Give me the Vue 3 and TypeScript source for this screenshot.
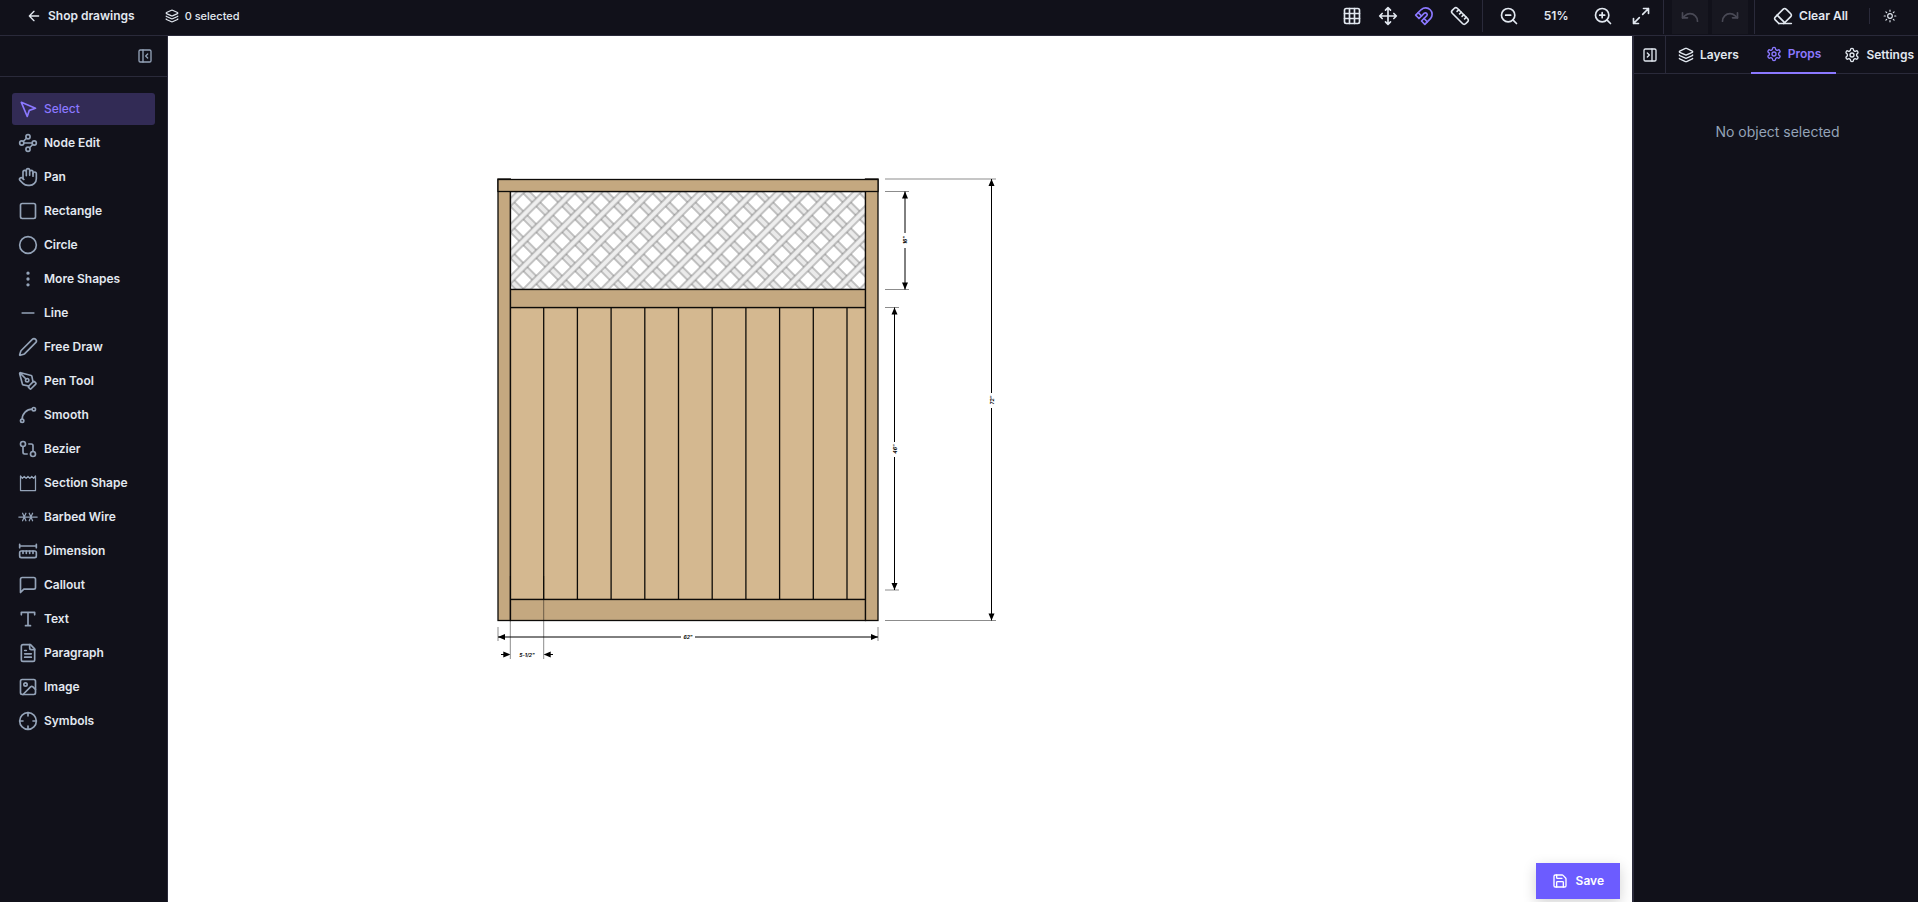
<script setup lang="ts">
import { h, ref, type FunctionalComponent } from 'vue'

const GEAR =
  '<path d="M12.22 2h-.44a2 2 0 0 0-2 2v.18a2 2 0 0 1-1 1.73l-.43.25a2 2 0 0 1-2 0l-.15-.08a2 2 0 0 0-2.73.73l-.22.38a2 2 0 0 0 .73 2.73l.15.1a2 2 0 0 1 1 1.72v.51a2 2 0 0 1-1 1.74l-.15.09a2 2 0 0 0-.73 2.73l.22.38a2 2 0 0 0 2.73.73l.15-.08a2 2 0 0 1 2 0l.43.25a2 2 0 0 1 1 1.73V20a2 2 0 0 0 2 2h.44a2 2 0 0 0 2-2v-.18a2 2 0 0 1 1-1.73l.43-.25a2 2 0 0 1 2 0l.15.08a2 2 0 0 0 2.73-.73l.22-.39a2 2 0 0 0-.73-2.73l-.15-.08a2 2 0 0 1-1-1.74v-.5a2 2 0 0 1 1-1.74l.15-.09a2 2 0 0 0 .73-2.73l-.22-.38a2 2 0 0 0-2.73-.73l-.15.08a2 2 0 0 1-2 0l-.43-.25a2 2 0 0 1-1-1.73V4a2 2 0 0 0-2-2z"/><circle cx="12" cy="12" r="3"/>'

const icons: Record<string, string> = {
  back: '<path d="m12 19-7-7 7-7M19 12H5"/>',
  layers:
    '<path d="M12.83 2.18a2 2 0 0 0-1.66 0L2.6 6.08a1 1 0 0 0 0 1.83l8.58 3.91a2 2 0 0 0 1.66 0l8.58-3.9a1 1 0 0 0 0-1.83z"/><path d="M2 12a1 1 0 0 0 .58.91l8.6 3.91a2 2 0 0 0 1.65 0l8.58-3.9A1 1 0 0 0 22 12"/><path d="M2 17a1 1 0 0 0 .58.91l8.6 3.91a2 2 0 0 0 1.65 0l8.58-3.9A1 1 0 0 0 22 17"/>',
  grid: '<rect x="3" y="3" width="18" height="18" rx="2"/><path d="M3 9h18M3 15h18M9 3v18M15 3v18"/>',
  move: '<path d="M12 2v20M15 19l-3 3-3-3M19 9l3 3-3 3M2 12h20M5 9l-3 3 3 3M9 5l3-3 3 3"/>',
  magnet:
    '<path d="m6 15-4-4 6.75-6.77a7.79 7.79 0 0 1 11 11L13 22l-4-4 6.39-6.36a2.14 2.14 0 0 0-3-3L6 15"/><path d="m5 8 4 4M12 15l4 4"/>',
  ruler:
    '<path d="M21.3 15.3a2.4 2.4 0 0 1 0 3.4l-2.6 2.6a2.4 2.4 0 0 1-3.4 0L2.7 8.7a2.41 2.41 0 0 1 0-3.4l2.6-2.6a2.41 2.41 0 0 1 3.4 0Z"/><path d="m14.5 12.5 2-2M11.5 9.5l2-2M8.5 6.5l2-2M17.5 15.5l2-2"/>',
  zoomOut: '<circle cx="11" cy="11" r="8"/><path d="m21 21-4.35-4.35M8 11h6"/>',
  zoomIn: '<circle cx="11" cy="11" r="8"/><path d="m21 21-4.35-4.35M11 8v6M8 11h6"/>',
  fit: '<path d="M15 3h6v6M21 3l-7 7M3 21l7-7M9 21H3v-6"/>',
  undo: '<path d="M3 7v6h6"/><path d="M21 17a9 9 0 0 0-9-9 9 9 0 0 0-6 2.3L3 13"/>',
  redo: '<path d="M21 7v6h-6"/><path d="M3 17a9 9 0 0 1 9-9 9 9 0 0 1 6 2.3l3 2.7"/>',
  eraser:
    '<path d="m7 21-4.3-4.3c-1-1-1-2.5 0-3.4l9.6-9.6c1-1 2.5-1 3.4 0l5.6 5.6c1 1 1 2.5 0 3.4L13 21"/><path d="M22 21H7M5 11l9 9"/>',
  sun: '<circle cx="12" cy="12" r="4"/><path d="M12 2v2M12 20v2M4.93 4.93l1.41 1.41M17.66 17.66l1.41 1.41M2 12h2M20 12h2M6.34 17.66l-1.41 1.41M19.07 4.93l-1.41 1.41"/>',
  panelLeft: '<rect x="3" y="3" width="18" height="18" rx="2"/><path d="M9 3v18M16 15l-3-3 3-3"/>',
  panelRight: '<rect x="3" y="3" width="18" height="18" rx="2"/><path d="M15 3v18M8 9l3 3-3 3"/>',
  gear: GEAR,
  select: '<path d="m4 4 7.07 17 2.51-7.39L21 11.07z"/>',
  nodes:
    '<circle cx="12" cy="4.5" r="2.5"/><path d="m10.2 6.3-3.9 3.9"/><circle cx="4.5" cy="12" r="2.5"/><path d="M7 12h10"/><circle cx="19.5" cy="12" r="2.5"/><path d="m13.8 17.7 3.9-3.9"/><circle cx="12" cy="19.5" r="2.5"/>',
  hand: '<path d="M18 11V6a2 2 0 0 0-4 0M14 10V4a2 2 0 0 0-4 0v2M10 10.5V6a2 2 0 0 0-4 0v8"/><path d="M18 8a2 2 0 1 1 4 0v6a8 8 0 0 1-8 8h-2c-2.8 0-4.5-.86-5.99-2.34l-3.6-3.6a2 2 0 0 1 2.83-2.82L7 15"/>',
  rect: '<rect x="3" y="3" width="18" height="18" rx="2"/>',
  circle: '<circle cx="12" cy="12" r="10"/>',
  more: '<circle cx="12" cy="12" r="1"/><circle cx="12" cy="5" r="1"/><circle cx="12" cy="19" r="1"/>',
  line: '<path d="M5 12h14"/>',
  pen: '<path d="M21.174 6.812a1 1 0 0 0-3.986-3.987L3.842 16.174a2 2 0 0 0-.5.83l-1.321 4.352a.5.5 0 0 0 .623.622l4.353-1.32a2 2 0 0 0 .83-.497z"/>',
  penTool:
    '<path d="M15.707 21.293a1 1 0 0 1-1.414 0l-1.586-1.586a1 1 0 0 1 0-1.414l5.586-5.586a1 1 0 0 1 1.414 0l1.586 1.586a1 1 0 0 1 0 1.414z"/><path d="m18 13-1.375-6.874a1 1 0 0 0-.746-.776L3.235 2.028a1 1 0 0 0-1.207 1.207L5.35 15.879a1 1 0 0 0 .776.746L13 18M2.3 2.3l7.286 7.286"/><circle cx="11" cy="11" r="2"/>',
  smooth: '<circle cx="19" cy="5" r="2"/><circle cx="5" cy="19" r="2"/><path d="M5 17A12 12 0 0 1 17 5"/>',
  bezier:
    '<circle cx="18" cy="18" r="3"/><circle cx="6" cy="6" r="3"/><path d="M13 6h3a2 2 0 0 1 2 2v7M11 18H8a2 2 0 0 1-2-2V9"/>',
  section:
    '<path stroke-width="1.5" d="M3 3.500v17.500h18V3.500l-2.250 3L16.500 4l-2.250 2.500L12 4 9.750 6.500 7.500 4 5.250 6.500z"/>',
  barbed: '<path stroke-width="1.5" d="M1 12h22M5.500 7.500l4 9M9.500 7.500l-4 9M13.500 7.500l4 9M17.500 7.500l-4 9"/>',
  dimension:
    '<path d="M10 15v-3M14 15v-3M18 15v-3M2 8V4M22 6H2M22 8V4M6 15v-3"/><rect x="2" y="12" width="20" height="8" rx="2"/>',
  callout: '<path d="M21 15a2 2 0 0 1-2 2H7l-4 4V5a2 2 0 0 1 2-2h14a2 2 0 0 1 2 2z"/>',
  text: '<path d="M4 7V4h16v3M9 20h6M12 4v16"/>',
  paragraph:
    '<path d="M15 2H6a2 2 0 0 0-2 2v16a2 2 0 0 0 2 2h12a2 2 0 0 0 2-2V7Z"/><path d="M14 2v4a2 2 0 0 0 2 2h4M10 9H8M16 13H8M16 17H8"/>',
  image:
    '<rect x="3" y="3" width="18" height="18" rx="2"/><circle cx="9" cy="9" r="2"/><path d="m21 15-3.086-3.086a2 2 0 0 0-2.828 0L6 21"/>',
  symbols: '<circle cx="12" cy="12" r="10"/><path d="M22 12h-4M6 12H2M12 6V2M12 22v-4"/>',
  save: '<path d="M15.2 3a2 2 0 0 1 1.4.6l3.8 3.8a2 2 0 0 1 .6 1.400V19a2 2 0 0 1-2 2H5a2 2 0 0 1-2-2V5a2 2 0 0 1 2-2z"/><path d="M17 21v-7a1 1 0 0 0-1-1H8a1 1 0 0 0-1 1v7M7 3v4a1 1 0 0 0 1 1h7"/>',
}

const Icon: FunctionalComponent<{ name: string; size?: number }> = (props) =>
  h('svg', {
    viewBox: '0 0 24 24',
    width: props.size ?? 20,
    height: props.size ?? 20,
    fill: 'none',
    stroke: 'currentColor',
    'stroke-width': 2,
    'stroke-linecap': 'round',
    'stroke-linejoin': 'round',
    'aria-hidden': 'true',
    innerHTML: icons[props.name],
  })
Icon.props = ['name', 'size']

interface Tool {
  label: string
  icon: string
}
const tools: Tool[] = [
  { label: 'Select', icon: 'select' },
  { label: 'Node Edit', icon: 'nodes' },
  { label: 'Pan', icon: 'hand' },
  { label: 'Rectangle', icon: 'rect' },
  { label: 'Circle', icon: 'circle' },
  { label: 'More Shapes', icon: 'more' },
  { label: 'Line', icon: 'line' },
  { label: 'Free Draw', icon: 'pen' },
  { label: 'Pen Tool', icon: 'penTool' },
  { label: 'Smooth', icon: 'smooth' },
  { label: 'Bezier', icon: 'bezier' },
  { label: 'Section Shape', icon: 'section' },
  { label: 'Barbed Wire', icon: 'barbed' },
  { label: 'Dimension', icon: 'dimension' },
  { label: 'Callout', icon: 'callout' },
  { label: 'Text', icon: 'text' },
  { label: 'Paragraph', icon: 'paragraph' },
  { label: 'Image', icon: 'image' },
  { label: 'Symbols', icon: 'symbols' },
]
const activeTool = ref('Select')

const tabs = [
  { label: 'Layers', icon: 'layers' },
  { label: 'Props', icon: 'gear' },
  { label: 'Settings', icon: 'gear' },
]
const activeTab = ref('Props')

const toggles = [
  { label: 'Grid', icon: 'grid' },
  { label: 'Move', icon: 'move' },
  { label: 'Snap', icon: 'magnet' },
  { label: 'Rulers', icon: 'ruler' },
]
const activeToggle = ref('Snap')

// Seams between the fence boards, 5 1/2" apart
const seams = Array.from({ length: 10 }, (_, i) => 12 + 33.7 * (i + 1))

// Vertical dimensions: line x, top, bottom, end of the extension lines, label
const heights = [
  { x: 407, top: 12.5, bottom: 110.5, end: 411, mid: 61, label: '16"' },
  { x: 396.5, top: 128.5, bottom: 411, end: 401, mid: 270, label: '46"' },
  { x: 493.5, top: 0, bottom: 441.5, end: 498, mid: 221, label: '72"' },
]
</script>

<template>
  <div class="app">
    <header class="topbar">
      <button type="button" class="back"><Icon name="back" :size="16" />Shop drawings</button>
      <div class="count"><Icon name="layers" :size="14" /><span>0 selected</span></div>
      <div class="group toggles">
        <button
          v-for="t in toggles"
          :key="t.label"
          type="button"
          class="tbtn"
          :class="{ on: activeToggle === t.label }"
          :aria-label="t.label"
          @click="activeToggle = t.label"
        >
          <Icon :name="t.icon" />
        </button>
      </div>
      <div class="group zoom">
        <button type="button" class="tbtn" aria-label="Zoom out"><Icon name="zoomOut" /></button>
        <span class="percent">51%</span>
        <button type="button" class="tbtn" aria-label="Zoom in"><Icon name="zoomIn" /></button>
        <button type="button" class="tbtn fit" aria-label="Fit to screen"><Icon name="fit" /></button>
      </div>
      <div class="group history">
        <button type="button" class="tbtn" disabled aria-label="Undo"><Icon name="undo" /></button>
        <button type="button" class="tbtn" disabled aria-label="Redo"><Icon name="redo" /></button>
      </div>
      <div class="group end">
        <button type="button" class="clear"><Icon name="eraser" />Clear All</button>
        <span class="rule"></span>
        <button type="button" class="tbtn sun" aria-label="Toggle theme"><Icon name="sun" :size="14" /></button>
      </div>
    </header>

    <div class="body">
      <aside class="sidebar">
        <div class="sidehead">
          <button type="button" class="collapse" aria-label="Collapse toolbar"><Icon name="panelLeft" :size="16" /></button>
        </div>
        <nav class="tools">
          <button
            v-for="t in tools"
            :key="t.label"
            type="button"
            class="tool"
            :class="{ active: activeTool === t.label }"
            @click="activeTool = t.label"
          >
            <Icon :name="t.icon" />{{ t.label }}
          </button>
        </nav>
      </aside>

      <main class="canvas">
        <svg class="sheet" role="img" aria-label="Fence panel drawing">
          <defs>
            <pattern
              id="lattice"
              width="18.3"
              height="18.3"
              patternUnits="userSpaceOnUse"
              patternTransform="translate(25.3 23.3) rotate(-45) translate(-9.15 -9.15)"
            >
              <rect width="18.3" height="18.3" fill="#fff" />
              <path d="M0 0h2.900v18.300H0zM15.400 0h2.900v18.300h-2.900z" fill="#ececec" />
              <path d="M2.900 0v18.300M15.400 0v18.300" stroke="#757575" stroke-width=".8" />
              <path d="M1.200 0v18.300M17 0v18.300" stroke="#dcdcdc" stroke-width=".4" />
              <path d="M0 0h18.300v2.900H0zM0 15.400h18.300v2.900H0z" fill="#f0f0f0" />
              <path d="M0 2.900h18.300M0 15.400h18.300" stroke="#757575" stroke-width=".8" />
              <path d="M0 1.400h18.300M0 17h18.300" stroke="#dfdfdf" stroke-width=".4" />
            </pattern>
          </defs>
          <g transform="translate(330 143)">
            <g stroke="#0d0b08" stroke-width="1.3">
              <rect x="12.500" y="128.500" width="355" height="292" fill="#d4b890" />
              <path v-for="x in seams" :key="x" :d="`M${x} 128.500V420.500`" />
              <rect x="12.500" y="12.500" width="355" height="98" fill="url(#lattice)" />
              <rect x="12.500" y="110.500" width="355" height="18" fill="#c4a880" />
              <rect x="12.500" y="420.500" width="355" height="21" fill="#c4a880" />
              <rect x="0" y="0" width="12.300" height="441.500" fill="#c4a880" />
              <rect x="367.500" y="0" width="12.500" height="441.500" fill="#c4a880" />
              <rect x="0" y="0.500" width="380" height="12" fill="#c4a880" />
            </g>

            <g v-for="d in heights" :key="d.label">
              <path :d="`M387 ${d.top}H${d.end}M387 ${d.bottom}H${d.end}`" class="ext" />
              <path :d="`M${d.x} ${d.top}V${d.mid - 7}M${d.x} ${d.mid + 8}V${d.bottom}`" class="dim" />
              <path :d="`M${d.x} ${d.top}l3 7h-6zM${d.x} ${d.bottom}l3-7h-6z`" />
              <text :transform="`translate(${d.x + 2} ${d.mid}) rotate(-90)`" class="label">{{ d.label }}</text>
            </g>

            <path d="M0 448v14M380 448v14M12.300 397v83M45.700 397v83" class="ext" />
            <path d="M0 458H183M197 458H380M3 475.500h7M49 475.500h6" class="dim" />
            <path d="M0 458l7-3v6zM380 458l-7-3v6zM12.300 475.500l-7-3v6zM45.700 475.500l7-3v6z" />
            <text x="190" y="460" class="label">62"</text>
            <text x="29" y="478" class="label">5-1/2"</text>
          </g>
        </svg>
        <button type="button" class="save"><Icon name="save" :size="16" />Save</button>
      </main>

      <aside class="panel">
        <div class="tabs">
          <button type="button" class="expand" aria-label="Collapse panel"><Icon name="panelRight" :size="16" /></button>
          <button
            v-for="t in tabs"
            :key="t.label"
            type="button"
            class="tab"
            :class="{ active: activeTab === t.label }"
            @click="activeTab = t.label"
          >
            <Icon :name="t.icon" :size="16" />{{ t.label }}
          </button>
        </div>
        <p class="empty">No object selected</p>
      </aside>
    </div>
  </div>
</template>

<style>
body {
  margin: 0;
  background: #11111a;
}
</style>

<style scoped>
.app {
  display: flex;
  flex-direction: column;
  height: 100vh;
  overflow: hidden;
  background: #11111a;
  color: #e2e8f0;
  font-family: Inter, 'Liberation Sans', sans-serif;
  font-size: 12px;
  line-height: 16px;
}
button {
  display: flex;
  align-items: center;
  padding: 0;
  border: 0;
  background: none;
  color: inherit;
  font: inherit;
  cursor: pointer;
}
svg {
  flex: none;
}
.topbar {
  display: flex;
  flex: none;
  height: 35px;
  border-bottom: 1px solid #2a2a3a;
}
.back,
.count {
  display: flex;
  align-items: center;
  height: 32px;
}
.back {
  gap: 6px;
  margin-left: 26px;
  font-weight: 600;
}
.count {
  gap: 6px;
  margin-left: 30px;
  font-size: 11px;
  font-weight: 500;
}
.group {
  display: flex;
  align-items: center;
  height: 32px;
}
.toggles {
  margin-left: auto;
  padding-right: 4px;
}
.tbtn {
  justify-content: center;
  width: 36px;
  height: 32px;
}
.tbtn.on {
  color: #8b78ff;
}
.zoom {
  padding: 0 4px 0 8px;
  border-left: 1px solid #2a2a3a;
}
.percent {
  width: 58px;
  text-align: center;
  font-weight: 600;
}
.fit {
  margin-left: 2px;
}
.history {
  gap: 4px;
  height: 34px;
  padding: 0 6px 0 8px;
  border-left: 1px solid #2a2a3a;
  border-right: 1px solid #2a2a3a;
}
.history .tbtn {
  height: 34px;
  background: #171720;
  color: #494955;
}
.end {
  padding-right: 10px;
}
.clear {
  gap: 6px;
  padding: 0 21px 0 18px;
  font-weight: 600;
}
.rule {
  width: 1px;
  height: 16px;
  background: #2a2a3a;
}
.sun {
  margin-left: 2px;
}
.body {
  display: flex;
  flex: 1;
  min-height: 0;
}
.sidebar {
  box-sizing: border-box;
  flex: none;
  width: 168px;
  border-right: 1px solid #2a2a3a;
}
.sidehead {
  display: flex;
  align-items: center;
  justify-content: flex-end;
  height: 40px;
  padding-right: 14px;
  border-bottom: 1px solid #2a2a3a;
  color: #94a3b8;
}
.tools {
  display: flex;
  flex-direction: column;
  gap: 2px;
  padding: 16px 12px;
}
.tool {
  gap: 6px;
  height: 32px;
  padding: 0 6px;
  border-radius: 3px;
  font-weight: 600;
}
.tool svg {
  color: #94a3b8;
}
.tool.active {
  background: #322b55;
  color: #8b78ff;
  font-weight: 500;
}
.tool.active svg {
  color: #8b78ff;
}
.canvas {
  position: relative;
  flex: 1;
  min-width: 0;
  background: #fff;
}
.sheet {
  display: block;
  width: 100%;
  height: 100%;
}
.ext {
  fill: none;
  stroke: rgb(0 0 0 / 45%);
}
.dim {
  fill: none;
  stroke: #000;
}
.label {
  font: italic 700 5px Inter, 'Liberation Sans', sans-serif;
  text-anchor: middle;
}
.save {
  position: absolute;
  right: 12px;
  bottom: 3px;
  gap: 8px;
  height: 36px;
  padding: 0 16px;
  background: #6c5cff;
  box-shadow: 0 4px 14px rgb(0 0 0 / 18%);
  color: #fff;
  font-weight: 600;
}
.panel {
  box-sizing: border-box;
  flex: none;
  width: 286px;
  overflow: hidden;
  border-left: 2px solid #2a2a3a;
}
.tabs {
  display: flex;
  height: 37px;
  border-bottom: 1px solid #2a2a3a;
}
.expand {
  flex: none;
  justify-content: center;
  width: 32px;
  border-right: 1px solid #2a2a3a;
}
.tab {
  flex: none;
  gap: 6px;
  height: 38px;
  padding: 0 8px;
  font-weight: 600;
}
.tab:nth-child(2) {
  padding: 0 12px;
}
.tab.active {
  box-sizing: border-box;
  padding: 0 15px;
  border-bottom: 2px solid #8b78ff;
  color: #8b78ff;
}
.empty {
  margin: 48px 0 0;
  padding-left: 3px;
  color: #94a3b8;
  font-size: 14px;
  line-height: 20px;
  text-align: center;
}
</style>
